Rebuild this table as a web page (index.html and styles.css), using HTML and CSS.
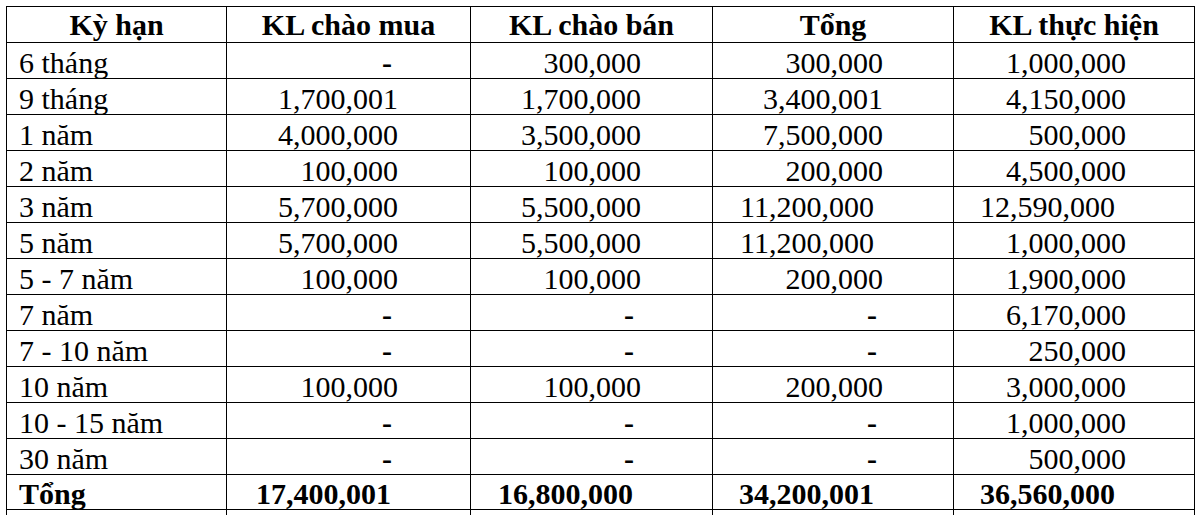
FILE: index.html
```html
<!DOCTYPE html>
<html lang="vi">
<head>
<meta charset="utf-8">
<title>Kỳ hạn</title>
<link rel="stylesheet" href="styles.css">
</head>
<body>
<table class="grid">
  <colgroup>
    <col class="c1"><col class="c2"><col class="c3"><col class="c4"><col class="c5">
  </colgroup>
  <thead>
    <tr class="head">
      <th>Kỳ hạn</th><th>KL chào mua</th><th>KL chào bán</th><th>Tổng</th><th>KL thực hiện</th>
    </tr>
  </thead>
  <tbody>
    <tr><td class="term">6 tháng</td><td class="n k2 dash">-</td><td class="n k3">300,000</td><td class="n k4">300,000</td><td class="n k5">1,000,000</td></tr>
    <tr><td class="term">9 tháng</td><td class="n k2">1,700,001</td><td class="n k3">1,700,000</td><td class="n k4">3,400,001</td><td class="n k5">4,150,000</td></tr>
    <tr><td class="term">1 năm</td><td class="n k2">4,000,000</td><td class="n k3">3,500,000</td><td class="n k4">7,500,000</td><td class="n k5">500,000</td></tr>
    <tr><td class="term">2 năm</td><td class="n k2">100,000</td><td class="n k3">100,000</td><td class="n k4">200,000</td><td class="n k5">4,500,000</td></tr>
    <tr><td class="term">3 năm</td><td class="n k2">5,700,000</td><td class="n k3">5,500,000</td><td class="n k4 wide">11,200,000</td><td class="n k5 wide">12,590,000</td></tr>
    <tr><td class="term">5 năm</td><td class="n k2">5,700,000</td><td class="n k3">5,500,000</td><td class="n k4 wide">11,200,000</td><td class="n k5">1,000,000</td></tr>
    <tr><td class="term">5 - 7 năm</td><td class="n k2">100,000</td><td class="n k3">100,000</td><td class="n k4">200,000</td><td class="n k5">1,900,000</td></tr>
    <tr><td class="term">7 năm</td><td class="n k2 dash">-</td><td class="n k3 dash">-</td><td class="n k4 dash">-</td><td class="n k5">6,170,000</td></tr>
    <tr><td class="term">7 - 10 năm</td><td class="n k2 dash">-</td><td class="n k3 dash">-</td><td class="n k4 dash">-</td><td class="n k5">250,000</td></tr>
    <tr><td class="term">10 năm</td><td class="n k2">100,000</td><td class="n k3">100,000</td><td class="n k4">200,000</td><td class="n k5">3,000,000</td></tr>
    <tr><td class="term">10 - 15 năm</td><td class="n k2 dash">-</td><td class="n k3 dash">-</td><td class="n k4 dash">-</td><td class="n k5">1,000,000</td></tr>
    <tr><td class="term">30 năm</td><td class="n k2 dash">-</td><td class="n k3 dash">-</td><td class="n k4 dash">-</td><td class="n k5">500,000</td></tr>
    <tr class="total"><td class="term">Tổng</td><td class="n k2 wide">17,400,001</td><td class="n k3 wide">16,800,000</td><td class="n k4 wide">34,200,001</td><td class="n k5 wide">36,560,000</td></tr>
    <tr class="tail"><td></td><td></td><td></td><td></td><td></td></tr>
  </tbody>
</table>
</body>
</html>
```
FILE: styles.css
```css
html, body {
  margin: 0;
  padding: 0;
  background: #ffffff;
  overflow: hidden;
}

body {
  padding: 6px 0 0 6px;
  font-family: "Liberation Serif", serif;
  font-size: 30px;
  color: #000;
}

.grid {
  border-collapse: collapse;
  table-layout: fixed;
  width: 1188px;
  font-family: "Liberation Serif", serif;
  font-size: 30px;
}

.c1 { width: 220px; }
.c2 { width: 244px; }
.c3 { width: 242px; }
.c4 { width: 241px; }
.c5 { width: 241px; }

.grid th,
.grid td {
  font-family: "Liberation Serif", serif;
  border: 1px solid #000;
  padding: 0;
  height: 35px;
  line-height: 30px;
  vertical-align: bottom;
  white-space: nowrap;
  overflow: hidden;
}

.head th {
  height: 33px;
  font-weight: bold;
  text-align: center;
  padding-bottom: 2px;
}

.term {
  text-align: left;
  padding-left: 12px !important;
}

.n { text-align: right; }
.k2 { padding-right: 72px !important; }
.k3 { padding-right: 71px !important; }
.k4 { padding-right: 70px !important; }
.k5 { padding-right: 68px !important; }

.k2.wide, .k3.wide, .k4.wide, .k5.wide { padding-right: 79px !important; }

.dash { font-weight: bold; }
.k2.dash, .k3.dash { padding-right: 78px !important; }
.k4.dash { padding-right: 76px !important; }

.total td { font-weight: bold; height: 34px; }

.tail td { height: 20px; }
```
